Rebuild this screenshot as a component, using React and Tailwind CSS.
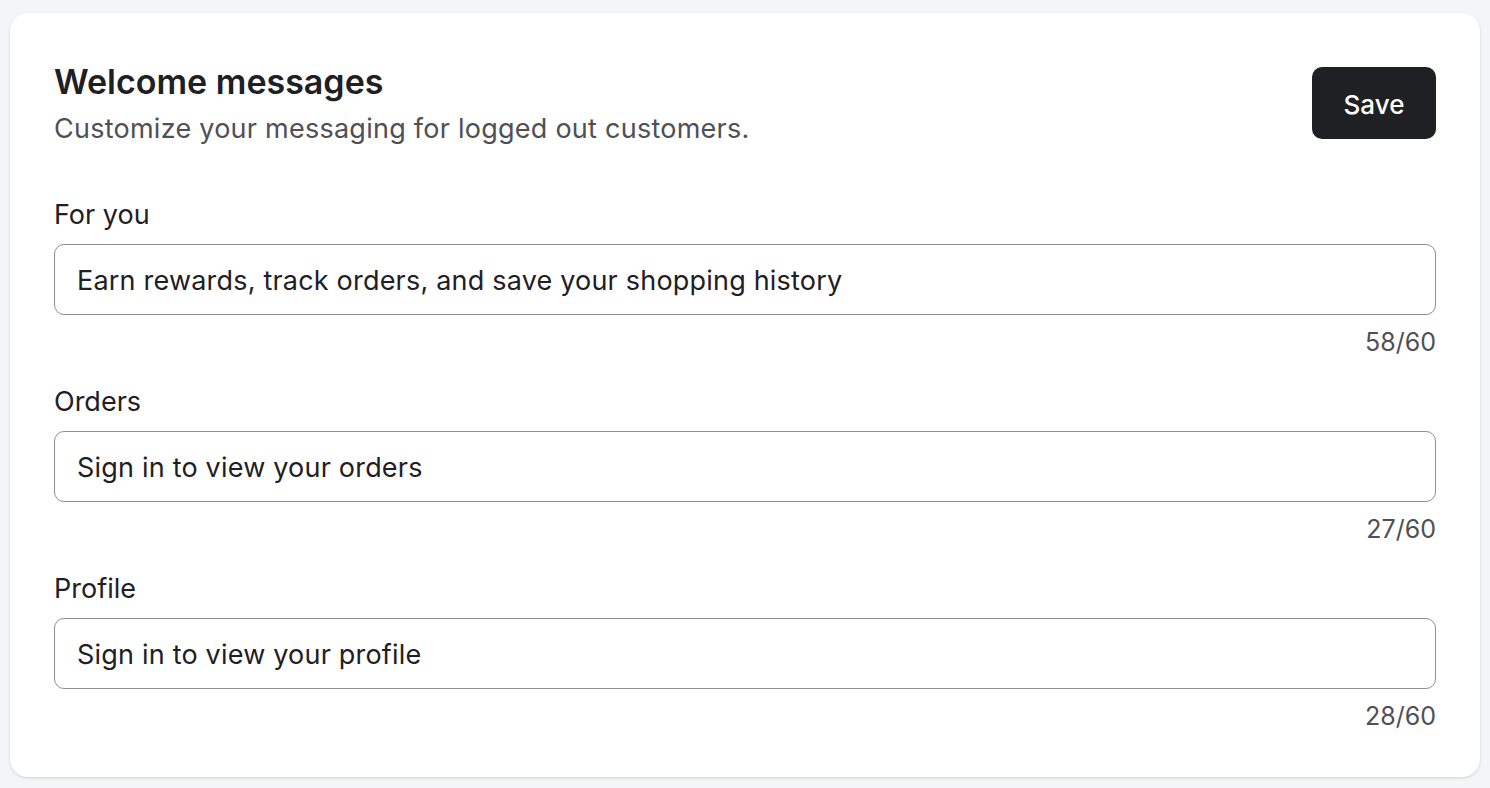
const fields = [
  { label: "For you", value: "Earn rewards, track orders, and save your shopping history", count: "58/60" },
  { label: "Orders", value: "Sign in to view your orders", count: "27/60" },
  { label: "Profile", value: "Sign in to view your profile", count: "28/60" },
];

export default function App() {
  return (
    <div className="min-h-screen bg-[#f4f5f7] px-[10px] pt-[13px] pb-[12px] font-['Inter',sans-serif]">
      <div className="bg-white rounded-[18px] shadow-[0_1px_3px_rgba(0,0,0,0.15)] px-[44px] pt-[49px] pb-[46px]">
        <div className="flex items-start justify-between">
          <div>
            <h1 className="text-[34px] leading-[40px] font-semibold text-[#1f2023]">Welcome messages</h1>
            <p className="mt-[10px] text-[27px] leading-[34px] tracking-[0.25px] text-[#4f5054]">
              Customize your messaging for logged out customers.
            </p>
          </div>
          <button className="mt-[5px] h-[72px] w-[124px] pt-[3px] rounded-[10px] bg-[#1f2023] text-white text-[26px] font-medium">
            Save
          </button>
        </div>

        <div className="mt-[52px] flex flex-col gap-[28px]">
          {fields.map((f) => (
            <div key={f.label}>
              <label className="block text-[27px] leading-[34px] text-[#1f2023]">{f.label}</label>
              <div className="mt-[12px] h-[71px] rounded-[10px] border border-[#8e8e93] flex items-center px-[22px] pt-[4px]">
                <input
                  className="w-full outline-none text-[27px] tracking-[0.2px] text-[#1f2023] bg-transparent"
                  defaultValue={f.value}
                />
              </div>
              <div className="mt-[12px] text-right text-[25px] leading-[30px] text-[#4f5054]">{f.count}</div>
            </div>
          ))}
        </div>
      </div>
    </div>
  );
}
